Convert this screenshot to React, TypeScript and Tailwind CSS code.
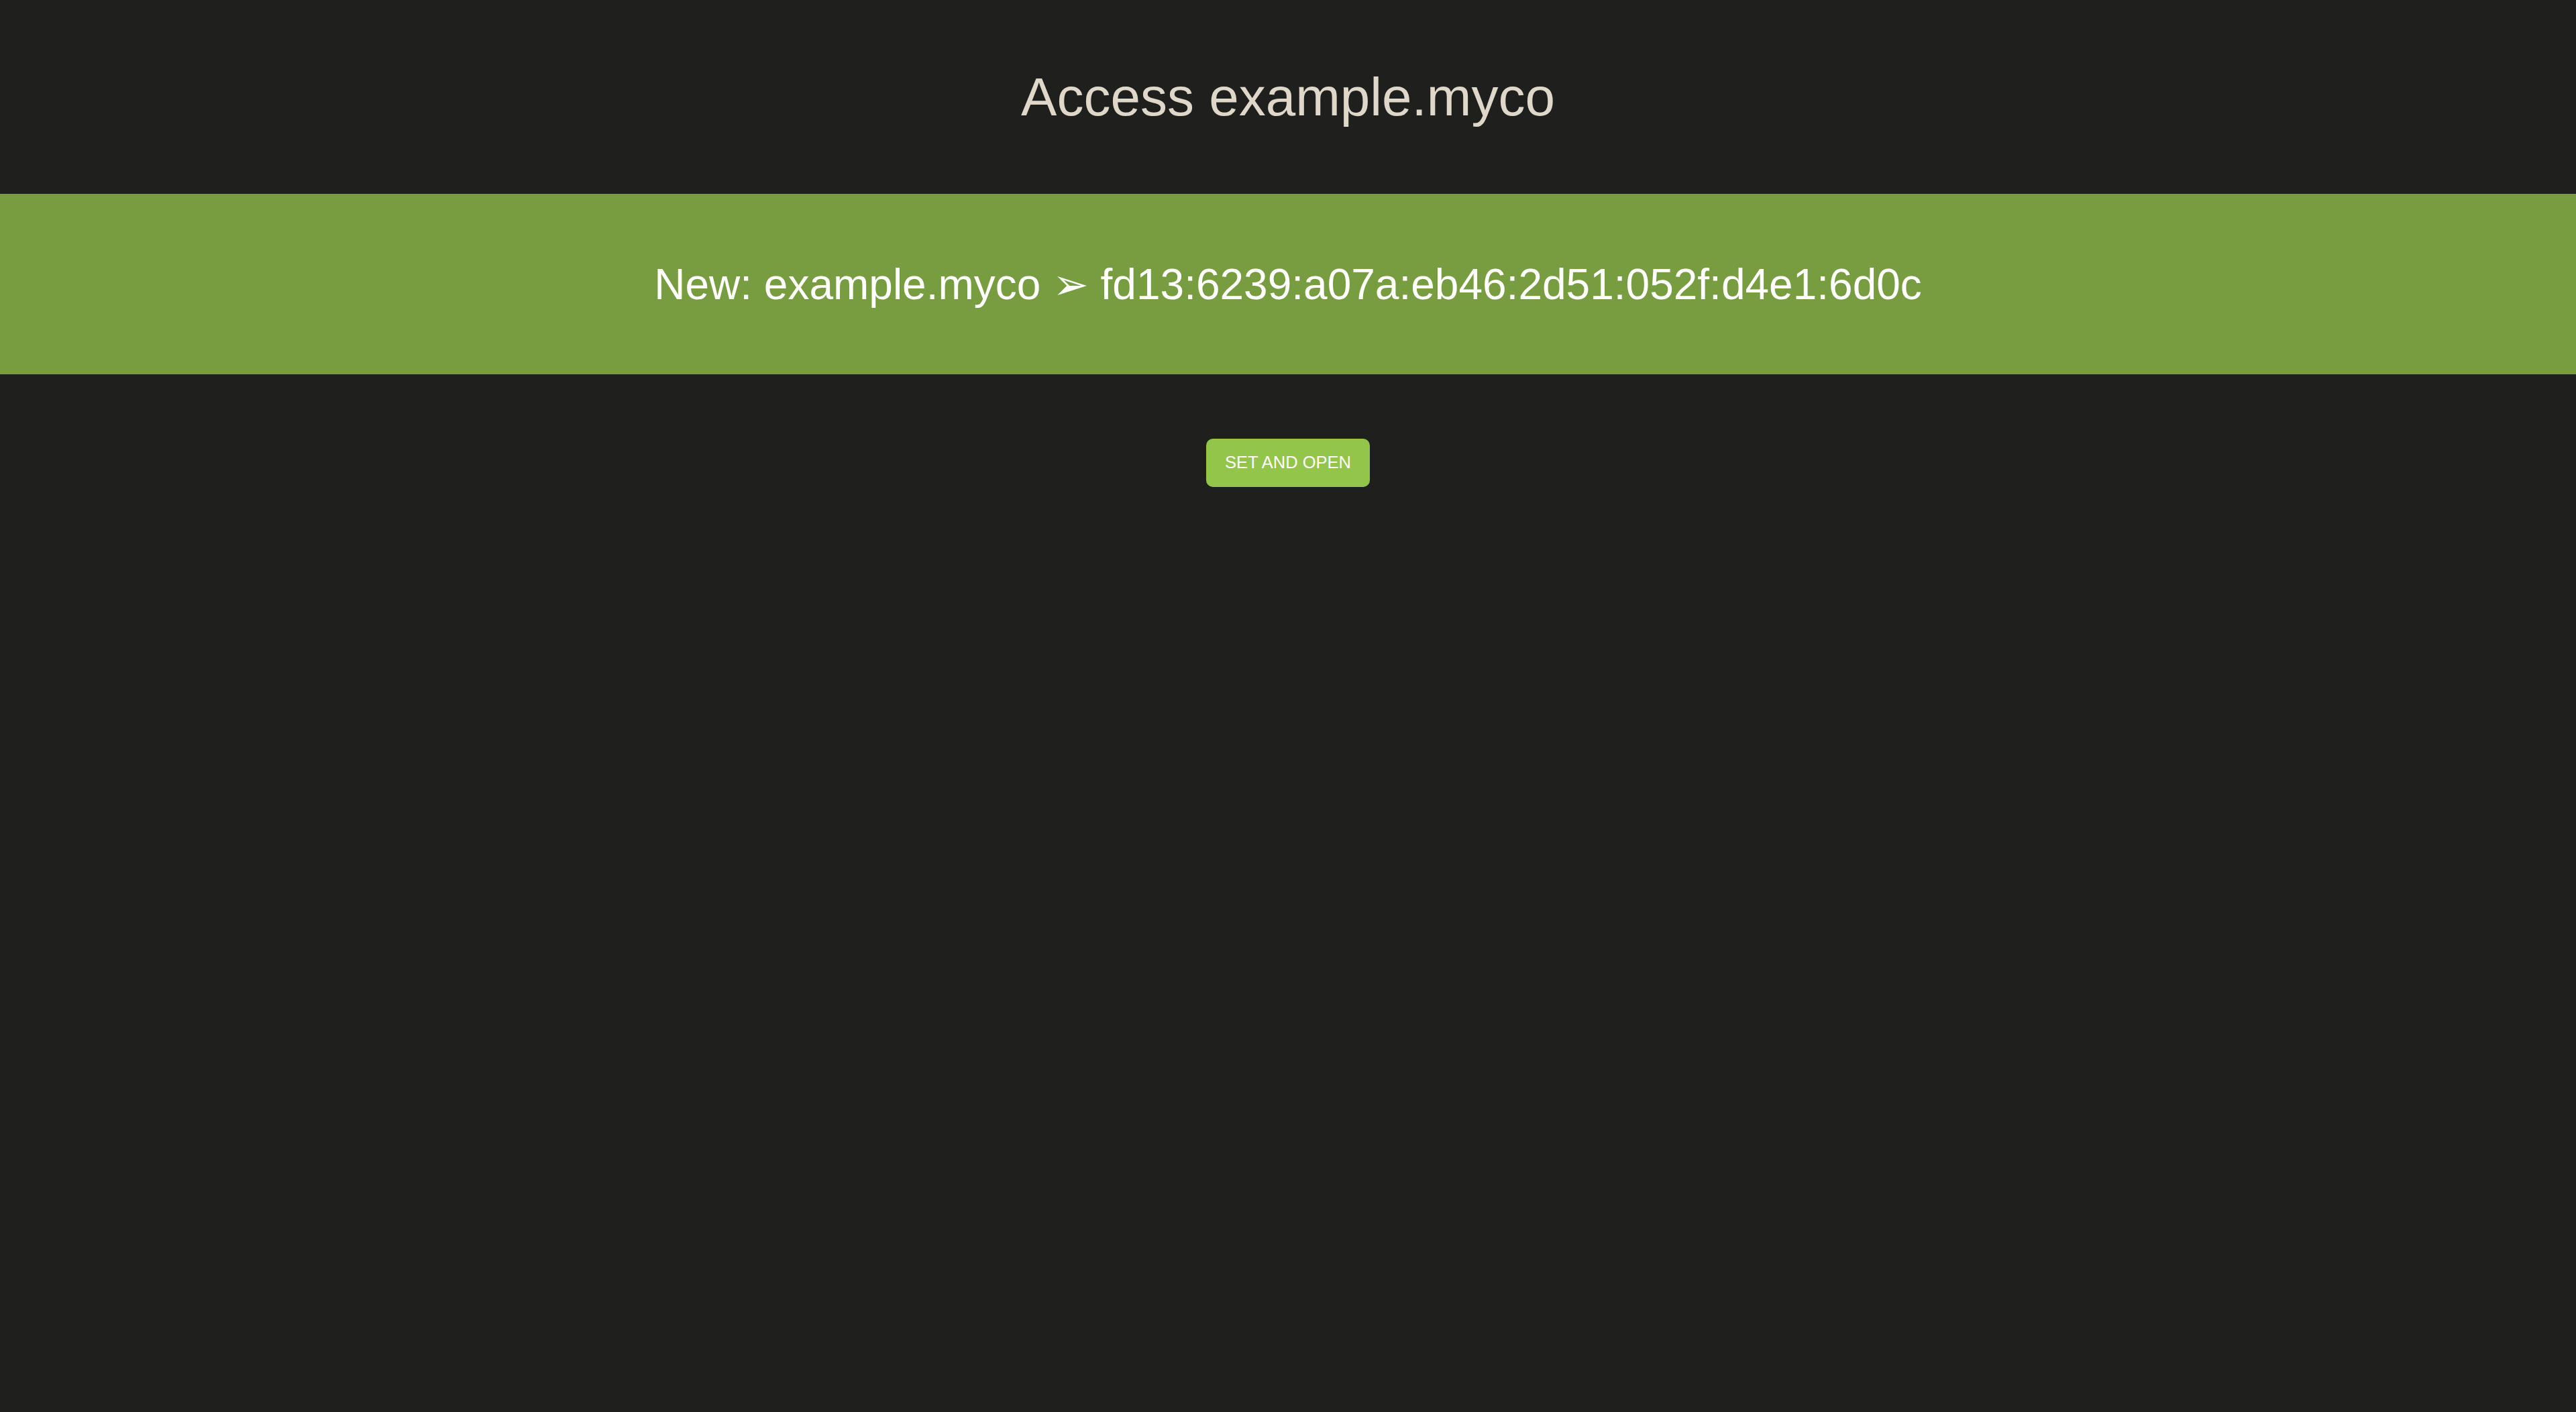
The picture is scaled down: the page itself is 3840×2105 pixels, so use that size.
import React from "react";

export default function App() {
  return (
    <div className="min-h-screen bg-[#1f1f1d] font-['Liberation_Sans','DejaVu_Sans',Arial,sans-serif]">
      <div className="h-[289px] flex items-center justify-center">
        <h1 className="text-[80px] leading-none font-normal text-[#dfd7ca] whitespace-nowrap">
          Access example.myco
        </h1>
      </div>
      <div className="h-[269px] bg-[#789c40] flex items-center justify-center">
        <p className="text-[64px] leading-none text-white whitespace-nowrap">
          New: example.myco ➢ fd13:6239:a07a:eb46:2d51:052f:d4e1:6d0c
        </p>
      </div>
      <div className="flex justify-center pt-[96px]">
        <button className="w-[244px] h-[72px] rounded-[10px] bg-[#93c54b] text-white text-[25.5px] uppercase leading-none">
          Set and open
        </button>
      </div>
    </div>
  );
}
